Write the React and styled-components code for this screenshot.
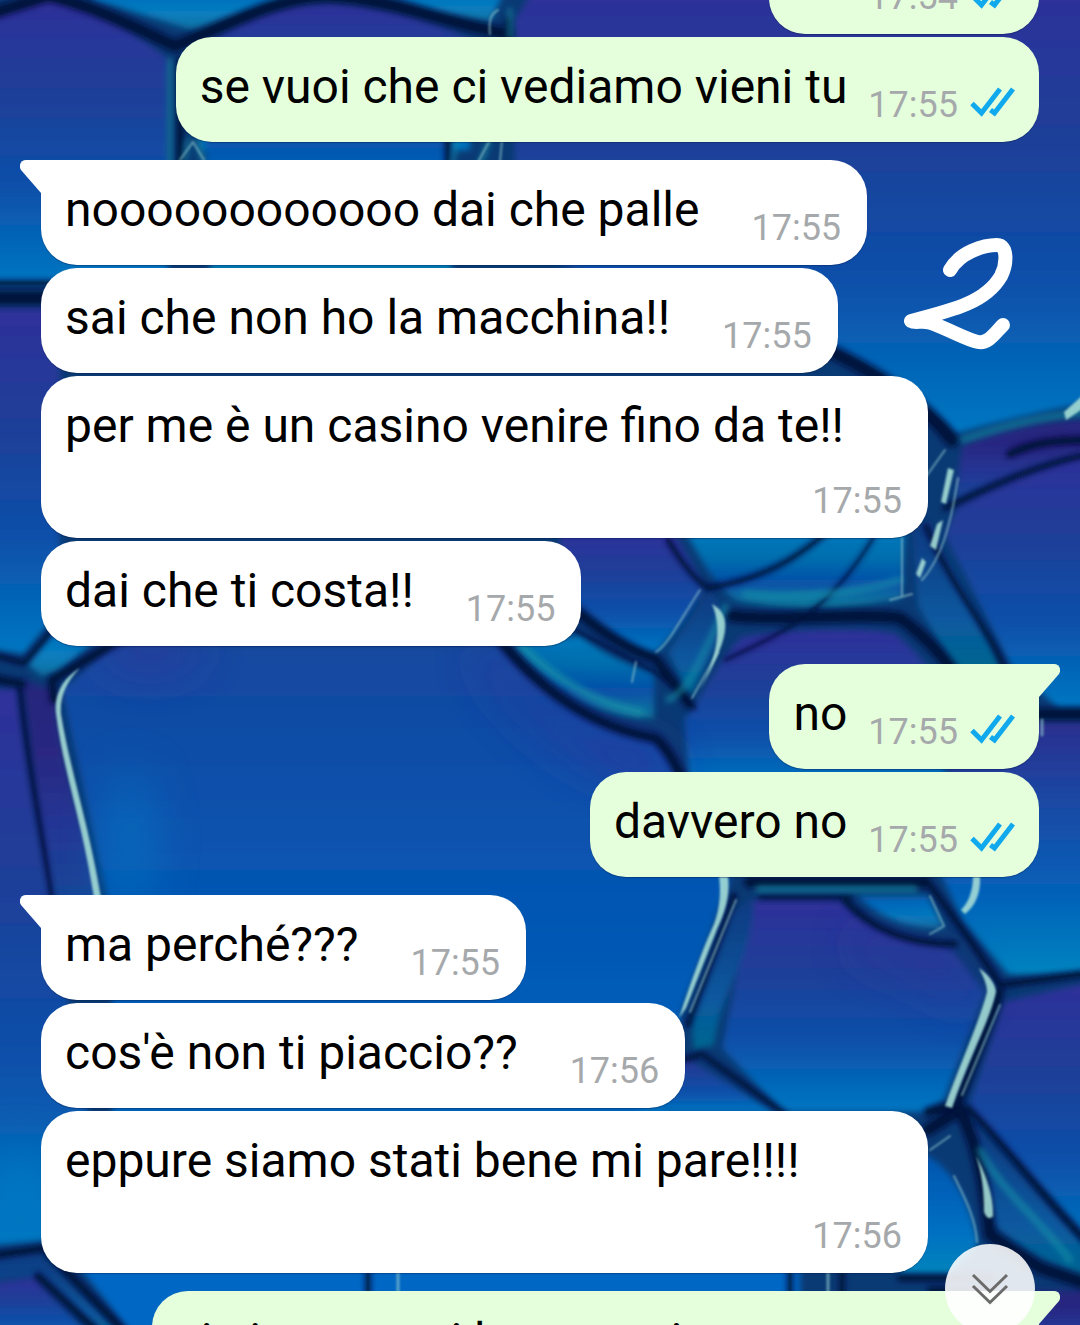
import React, { useLayoutEffect, useRef } from "react"
import styled, { createGlobalStyle, css } from "styled-components"

const GlobalStyle = createGlobalStyle`
  * {
    box-sizing: border-box;
  }
  body {
    margin: 0;
    font-family: Roboto, "Liberation Sans", sans-serif;
  }
`
const colors = {
  incoming: "#ffffff",
  outgoing: "#e5ffdc",
  text: "#000000",
  time: "#a6a9ab",
  tick: "#10a9ee",
}

const Screen = styled.main`
  position: relative;
  height: 100vh;
  overflow: hidden;
  background: #0b3f8c;
`
const WallpaperSvg = styled.svg`
  position: absolute;
  inset: 0;
  width: 100%;
  height: 100%;
`
const Scroller = styled.div`
  position: relative;
  height: 100%;
  overflow-y: auto;
  scrollbar-width: none;
`
const MessageList = styled.ol`
  display: flex;
  flex-direction: column;
  gap: 18px;
  margin: 0;
  padding: 0 41px;
  list-style: none;
`
const Group = styled.li`
  display: flex;
  flex-direction: column;
  gap: 3px;
  align-items: ${({ $mine }) => ($mine ? "flex-end" : "flex-start")};
`
const Bubble = styled.article`
  position: relative;
  display: flex;
  flex-wrap: wrap;
  align-items: flex-end;
  justify-content: space-between;
  column-gap: ${({ $mine }) => ($mine ? "21px" : "52px")};
  max-width: 887px;
  padding: 21px 26px 16px 24px;
  border-radius: 36px;
  background: ${({ $mine }) => ($mine ? colors.outgoing : colors.incoming)};
  box-shadow: 0 1px 1px rgba(0, 20, 60, 0.35);
  ${({ $mine }) =>
    $mine &&
    css`
      padding-right: 24px;
    `}
  ${({ $mine, $tail }) =>
    $tail &&
    css`
      ${$mine ? "border-top-right-radius: 0;" : "border-top-left-radius: 0;"}
    `}
`
const TailSvg = styled.svg`
  position: absolute;
  top: 0;
  width: 22px;
  height: 33px;
  fill: ${({ $mine }) => ($mine ? colors.outgoing : colors.incoming)};
  ${({ $mine }) =>
    $mine
      ? css`
          right: -21px;
          transform: scaleX(-1);
        `
      : css`
          left: -21px;
        `}
`
const Text = styled.p`
  margin: 0 0 11px;
  color: ${colors.text};
  font-size: 48px;
  line-height: 57px;
`
const Meta = styled.div`
  display: flex;
  align-items: flex-end;
  gap: 12px;
  min-height: 57px;
  margin-left: auto;
`
const Time = styled.time`
  color: ${colors.time};
  font-size: 36px;
  line-height: 42px;
`
const TicksSvg = styled.svg`
  width: 45px;
  height: 30px;
  margin-bottom: 9px;
  fill: none;
  stroke: ${colors.tick};
  stroke-width: 5;
`
const Scribble = styled.svg`
  position: absolute;
  top: 236px;
  right: 62px;
  width: 116px;
  height: 116px;
  fill: none;
  stroke: #fff;
  stroke-width: 14;
  stroke-linecap: round;
  stroke-linejoin: round;
  pointer-events: none;
`
const ScrollButton = styled.button`
  position: absolute;
  right: 45px;
  bottom: -9px;
  display: flex;
  align-items: center;
  justify-content: center;
  width: 90px;
  height: 90px;
  padding: 0;
  border: 0;
  border-radius: 50%;
  background: rgba(255, 255, 255, 0.88);
  cursor: pointer;
  svg {
    width: 40px;
    height: 34px;
    fill: none;
    stroke: #6b6b6b;
    stroke-width: 3;
  }
`

const groups = [
  {
    mine: true,
    tail: false,
    messages: [
      { text: "no", time: "17:54" },
      { text: "se vuoi che ci vediamo vieni tu", time: "17:55" },
    ],
  },
  {
    mine: false,
    tail: true,
    messages: [
      { text: "noooooooooooo dai che palle", time: "17:55" },
      { text: "sai che non ho la macchina!!", time: "17:55" },
      { text: "per me è un casino venire fino da te!!", time: "17:55" },
      { text: "dai che ti costa!!", time: "17:55" },
    ],
  },
  {
    mine: true,
    tail: true,
    messages: [
      { text: "no", time: "17:55" },
      { text: "davvero no", time: "17:55" },
    ],
  },
  {
    mine: false,
    tail: true,
    messages: [
      { text: "ma perché???", time: "17:55" },
      { text: "cos'è non ti piaccio??", time: "17:56" },
      { text: "eppure siamo stati bene mi pare!!!!", time: "17:56" },
    ],
  },
  {
    mine: true,
    tail: true,
    messages: [{ text: "si siamo stati bene ma io non sono", time: "17:56" }],
  },
]

const cells = [
  { fill: "night", d: "M-20 17L48 -4C90 8 140 32 168 60V284H-20Z" },
  { fill: "aqua", d: "M92 -20H290V0C250 8 215 28 192 30C165 22 125 8 92 0Z" },
  { fill: "night", d: "M196 50C250 10 300 2 340 4C400 10 440 24 470 40V150H200Z" },
  { fill: "glow", d: "M205 130H452V270H210Z" },
  { fill: "aqua", d: "M390 -20H510L490 22C450 18 420 8 390 -4Z" },
  { fill: "night", d: "M515 20L540 -20H1100V400C1030 414 990 424 955 434C930 408 885 378 830 352L515 250Z" },
  { fill: "night", d: "M-20 308H60V610L24 654L-20 648Z" },
  { fill: "aqua", d: "M27 664L66 612H130L58 672L42 676Z" },
  { fill: "night", d: "M-20 690L17 688C25 760 40 840 48 890L110 1235L-20 1246Z" },
  { fill: "violet", d: "M22 680L56 690C58 770 90 840 100 900L50 900Z" },
  { fill: "wide", d: "M62 690L112 645H500C545 700 610 728 655 735L690 790L730 880L682 1010L640 1290H112V920Z" },
  { fill: "night", d: "M560 530H672C690 560 700 575 704 588C690 615 670 638 655 654C620 645 600 620 560 590Z" },
  { fill: "teal", d: "M515 645L580 635C610 660 635 665 654 672V718C590 718 548 684 515 645Z" },
  { fill: "teal", d: "M685 532H905L902 598C850 610 780 610 735 600C710 580 700 555 685 532Z" },
  { fill: "deep", d: "M668 652L710 590C724 606 726 622 716 645L690 698Z" },
  { fill: "night", d: "M684 720C700 700 722 655 742 637C800 628 870 628 895 634C915 650 936 672 945 700V790H690Z" },
  { fill: "deep", d: "M912 530L930 520C950 570 985 625 1002 670H955L918 606Z" },
  { fill: "night", d: "M945 535L958 506C1000 484 1040 466 1100 452V708H1058L1010 664Z" },
  { fill: "violet", d: "M962 446C1000 430 1040 420 1100 418V450C1040 460 1000 480 955 500Z" },
  { fill: "night", d: "M752 900H840C875 938 925 944 950 948L985 992L944 1100L925 1112H782L722 1048Z" },
  { fill: "deep", d: "M728 915L754 898C756 950 720 990 714 1045L694 1050L690 1010Z" },
  { fill: "aqua", d: "M858 896H928L944 928C910 930 880 918 858 896Z" },
  { fill: "rise", d: "M960 722H1100V972C1050 974 1025 976 1008 974L962 920L930 850Z" },
  { fill: "night", d: "M1004 1002L1100 980V1250L968 1108Z" },
  { fill: "deep", d: "M966 1118C1000 1150 1050 1210 1100 1260V1280C1040 1264 1010 1240 994 1225Z" },
  { fill: "glow", d: "M900 1145C950 1155 970 1200 978 1245L950 1274H900Z" },
  { fill: "night", d: "M640 1050L690 1060L778 1114H640Z" },
  { fill: "flat", d: "M78 1265H800V1345H140Z" },
  { fill: "violet", d: "M1000 1290H1100V1345H1000Z" },
  { fill: "night", d: "M-20 1285L35 1278L100 1345H-20Z" },
  { fill: "deep", d: "M-20 1258L38 1254L112 1325L130 1345H112L38 1276L-20 1280Z" },
]
const shadows = [
  { w: 12, d: "M-10 14L48 -4C95 6 145 32 175 46C235 22 275 -2 325 -4C390 -2 440 22 508 34" },
  { w: 13, d: "M-10 298H800" },
  { w: 5, d: "M-10 283H200" },
  { w: 14, d: "M820 346C880 374 922 402 952 440" },
  { w: 5, d: "M-10 654L24 663L66 614" },
  { w: 8, d: "M-10 678L22 684M54 700L52 680L130 634" },
  { w: 4, d: "M20 688C28 770 42 830 52 900" },
  { w: 5, d: "M668 540C685 568 698 582 708 588C780 576 810 545 830 530" },
  { w: 12, d: "M732 616C780 622 860 612 900 618C930 640 945 660 960 680" },
  { w: 10, d: "M500 640C548 700 600 728 655 738C668 748 676 765 682 780" },
  { w: 9, d: "M575 610C610 640 640 654 655 658L690 705" },
  { w: 3, d: "M575 630L660 675L695 708M875 535C830 610 790 630 725 660" },
  { w: 5, d: "M926 526C950 585 990 630 1005 670M945 508C980 492 1030 466 1090 454" },
  { w: 8, d: "M1010 454C1030 444 1050 440 1090 440" },
  { w: 12, d: "M1030 714H1090M750 882H925" },
  { w: 4, d: "M760 897H850" },
  { w: 6, d: "M845 900C880 940 930 944 955 944M930 885C955 920 975 945 1000 985L1090 973" },
  { w: 5, d: "M734 895C728 920 704 980 688 1025M682 1060L702 1054L785 1114" },
  { w: 9, d: "M999 992C996 1010 974 1060 957 1105L928 1112" },
  { w: 12, d: "M928 1130L960 1110C980 1150 985 1190 990 1235L1040 1268L1090 1285" },
  { w: 6, d: "M968 1108C1010 1150 1045 1200 1090 1245M900 1278H990M930 1290H985" },
  { w: 7, d: "M-10 1256L44 1248L118 1325L130 1340M38 1276L96 1330" },
  { w: 5, d: "M368 1270V1300M790 1270V1300M842 1270V1300" },
  { w: 6, d: "M180 60V170M508 20V40M448 136V170" },
]
const sheens = [
  { w: 8, d: "M520 644C560 685 600 704 640 712" },
  { w: 6, d: "M745 594C800 600 860 592 900 580M758 889H915" },
  { w: 6, d: "M980 1150C1000 1190 1040 1220 1070 1260" },
  { w: 5, d: "M962 440C1000 428 1030 418 1090 412M726 606C700 660 690 690 668 700" },
  { w: 4, d: "M188 140L184 162M170 60V165M198 140L204 165M456 140L452 165M490 138L480 165M510 10V38" },
]
const glints = [
  { w: 2, d: "M180 160L193 142L204 160M490 34C488 16 494 12 498 10M490 140L478 162M502 140L500 162" },
  { w: 2, d: "M700 590C680 620 668 645 656 652M636 662L632 682M718 652L692 698" },
  { w: 2, d: "M945 450L925 478M902 538V596M890 600L912 594M958 478C950 530 940 560 922 580" },
  { w: 2, d: "M736 900L690 1012M930 896L944 926L930 934M1000 1005L962 1095" },
  { w: 2, d: "M954 1176C966 1200 976 1220 977 1242M930 1150L950 1136" },
  { w: 3, d: "M398 1272V1292M828 1272V1292M955 668L964 676M1042 720V735" },
]

// thick highlights that taper at both ends
const shines = [
  "M80 668C60 680 54 698 56 714C64 775 82 820 94 898H101C88 820 70 770 61 714C60 700 64 684 80 668Z",
  "M712 604C734 616 728 640 700 690C714 662 724 632 712 604Z",
  "M948 468L954 470L946 504L941 502ZM937 524L943 520L936 550L930 546ZM922 558L926 562L920 578L916 574Z",
  "M1064 412L1084 394V408L1066 420Z",
  "M719 876H728C731 900 722 918 716 932L686 1008L679 1018C690 985 702 950 714 924C720 908 721 892 719 876Z",
  "M973 876H980C981 894 975 906 965 914L961 910C969 902 973 890 973 876Z",
  "M979 968C988 974 996 984 996 992C990 1020 968 1060 952 1108L945 1106C960 1064 980 1020 987 992C987 984 983 976 979 968Z",
  "M976 1156C984 1170 994 1195 993 1216C990 1220 986 1218 984 1212C984 1190 982 1174 976 1156Z",
]

const gradients = {
  night: ["#2f309a", "#1f3f98", "#0b50aa", "#0077c2"],
  wide: ["#15489f", "#0754b0", "#0060bb", "#006cc8"],
  glow: ["#0b52aa", "#0060b8", "#0070c2", "#0085bd"],
  aqua: ["#0c62b4", "#006fbd", "#087fc0", "#086f9e"],
  teal: ["#0078bd", "#046fae", "#0750a8", "#077f9d"],
  deep: ["#123a82", "#0a488e", "#0759a0", "#06678f"],
  violet: ["#24257c", "#292882", "#243695", "#174798"],
  rise: ["#2b2f8f", "#1a4aa5", "#0560b8", "#0084c0"],
  flat: ["#0068c4", "#0068c4", "#0068c4", "#0068c4"],
}

const Strokes = ({ items, color, filter, opacity }) => (
  <g fill="none" stroke={color} filter={filter} opacity={opacity} strokeLinecap="round">
    {items.map((item, key) => (
      <path key={key} d={item.d} strokeWidth={item.w} />
    ))}
  </g>
)

const Wallpaper = () => (
  <WallpaperSvg viewBox="0 0 1080 1325" preserveAspectRatio="xMidYMid slice" aria-hidden="true">
    <defs>
      {Object.entries(gradients).map(([id, stops]) => (
        <linearGradient key={id} id={id} x1="0.5" y1="0" x2="0.5" y2="1">
          {stops.map((color, key) => (
            <stop key={key} offset={key / 3} stopColor={color} />
          ))}
        </linearGradient>
      ))}
      <filter id="soft" x="-5%" y="-5%" width="110%" height="110%">
        <feGaussianBlur stdDeviation="3" />
      </filter>
      <filter id="fine" x="-5%" y="-5%" width="110%" height="110%">
        <feGaussianBlur stdDeviation="1" />
      </filter>
      <filter id="haze" x="-60%" y="-60%" width="220%" height="220%">
        <feGaussianBlur stdDeviation="24" />
      </filter>
    </defs>
    <rect width="1080" height="1325" fill="#0a3a74" />
    <g filter="url(#soft)">
      {cells.map((cell, key) => (
        <path key={key} d={cell.d} fill={`url(#${cell.fill})`} />
      ))}
    </g>
    <g fill="#34309a" opacity="0.8" filter="url(#haze)">
      <ellipse cx="150" cy="650" rx="50" ry="16" />
      <path d="M480 640C530 710 590 740 655 748L680 790L640 780C580 760 520 720 480 660Z" />
      <path d="M860 935C900 950 950 955 970 985V1010C940 975 900 960 850 950Z" />
    </g>
    <g fill="#0080c8" opacity="0.6" filter="url(#haze)">
      <ellipse cx="130" cy="840" rx="20" ry="70" />
      <ellipse cx="20" cy="1190" rx="40" ry="40" />
    </g>
    <Strokes items={shadows} color="#020e38" filter="url(#soft)" opacity="0.9" />
    <Strokes items={shadows.map(({ d, w }) => ({ d, w: w / 2 }))} color="#03123a" filter="url(#fine)" opacity="0.6" />
    <Strokes items={sheens} color="#1590a8" filter="url(#soft)" opacity="0.8" />
    <Strokes items={glints} color="#8fc4cc" filter="url(#fine)" opacity="0.65" />
    <g fill="#a4dcd6" filter="url(#fine)" opacity="0.9">
      {shines.map((d, key) => (
        <path key={key} d={d} />
      ))}
    </g>
  </WallpaperSvg>
)

const Tail = ({ mine }) => (
  <TailSvg $mine={mine} viewBox="0 0 22 33" aria-hidden="true">
    <path d="M22 0H6C1 0 -2 5 1 10L21 33H22Z" />
  </TailSvg>
)

const Ticks = () => (
  <TicksSvg viewBox="0 0 45 30" role="img" aria-label="Letto">
    <path d="M2 16.500L11.500 26L30 2M20.500 23L24.500 26L43 2" />
  </TicksSvg>
)

const Message = ({ mine, tail, text, time }) => (
  <Bubble $mine={mine} $tail={tail}>
    {tail && <Tail mine={mine} />}
    <Text>{text}</Text>
    <Meta>
      <Time>{time}</Time>
      {mine && <Ticks />}
    </Meta>
  </Bubble>
)

const App = () => {
  const scroller = useRef(null)

  // the chat opens a little way down the first message
  useLayoutEffect(() => {
    scroller.current.scrollTop = 71
  }, [])

  return (
    <Screen>
      <GlobalStyle />
      <Wallpaper />
      <Scroller ref={scroller}>
        <MessageList>
          {groups.map(({ mine, tail, messages }, key) => (
            <Group key={key} $mine={mine}>
              {messages.map((message, index) => (
                <Message key={index} mine={mine} tail={tail && index === 0} {...message} />
              ))}
            </Group>
          ))}
        </MessageList>
      </Scroller>
      <Scribble viewBox="0 0 116 116" aria-hidden="true">
        <path d="M48 34C58 16 82 9 95 9C106 9 105 28 99 40C84 66 52 74 9 85C14 88 22 83 32 88C52 96 66 104 76 106C86 108 92 98 101 89" />
      </Scribble>
      <ScrollButton type="button" aria-label="Vai in fondo">
        <svg viewBox="0 0 40 34" aria-hidden="true">
          <path d="M3 3L20 19.500L37 3M3 14L20 30.500L37 14" />
        </svg>
      </ScrollButton>
    </Screen>
  )
}

export default App
